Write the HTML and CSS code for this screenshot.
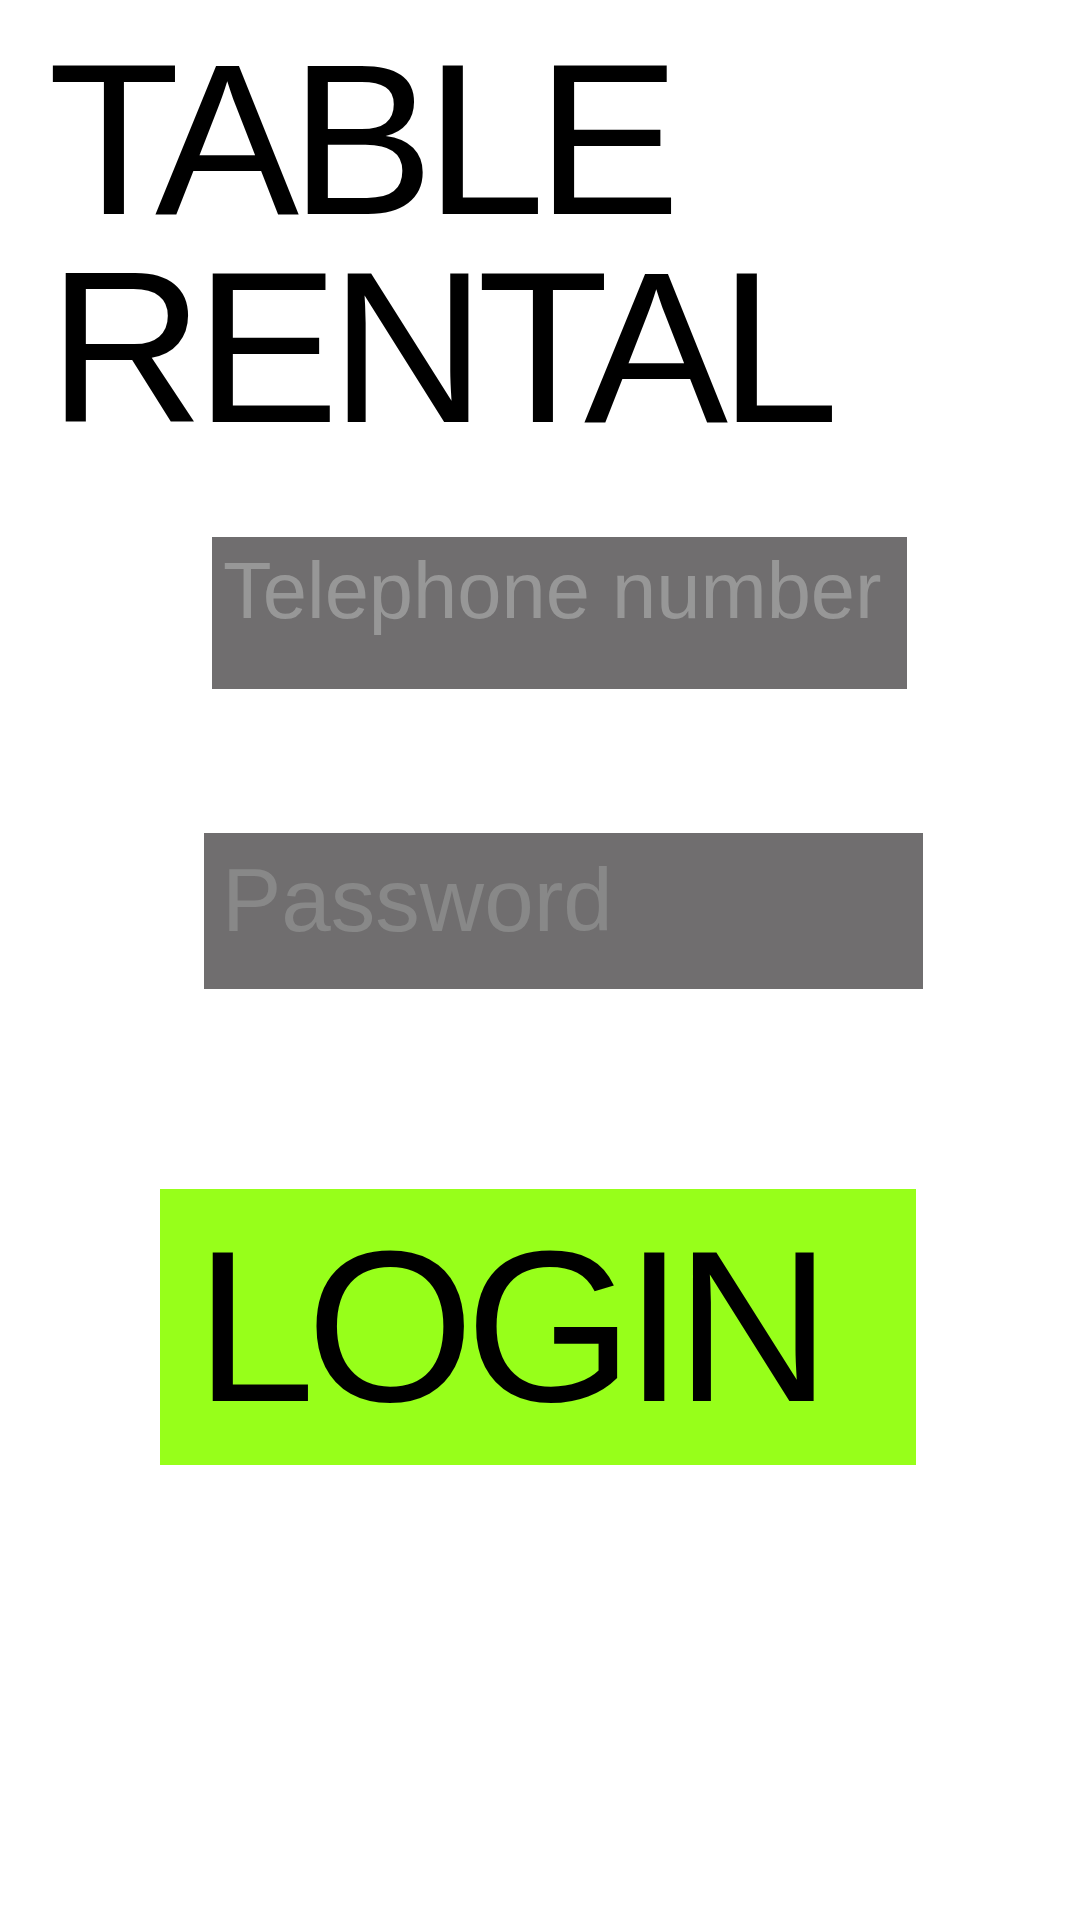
FILE: index.html
```html
<!DOCTYPE html>
<html lang="en">
<head>
<meta charset="utf-8">
<title>Table Rental</title>
<link rel="stylesheet" href="styles.css">
</head>
<body>
<main class="screen">
  <h1 class="title"><span class="title-line">TABLE</span><span class="title-line">RENTAL</span></h1>
  <div class="field field-phone"><span class="placeholder">Telephone number</span></div>
  <div class="field field-password"><span class="placeholder">Password</span></div>
  <div class="login"><span class="login-label">LOGIN</span></div>
</main>
</body>
</html>
```
FILE: styles.css
```css
html, body {
  margin: 0;
  padding: 0;
  background: #ffffff;
}

.screen {
  width: 1080px;
  height: 1920px;
  display: flex;
  flex-direction: column;
  align-items: flex-start;
  font-family: "Liberation Sans", Arial, sans-serif;
  box-sizing: border-box;
  padding-top: 35px;
}

.title {
  margin: 0 0 0 48px;
  font-weight: 400;
  font-size: 216px;
  line-height: 208px;
  letter-spacing: -9px;
  color: #000000;
  display: flex;
  flex-direction: column;
}

.title-line {
  display: block;
  height: 208px;
}

.field {
  background: #706e6f;
  box-sizing: border-box;
}

.field-phone {
  margin-top: 86px;
  margin-left: 212px;
  width: 695px;
  height: 152px;
  padding: 14px 0 0 11px;
}

.field-phone .placeholder {
  display: block;
  font-size: 79.5px;
  line-height: 80px;
  color: #979797;
}

.field-password {
  margin-top: 144px;
  margin-left: 204px;
  width: 719px;
  height: 156px;
  padding: 22px 0 0 18px;
}

.field-password .placeholder {
  display: block;
  font-size: 89px;
  line-height: 90px;
  color: #888888;
}

.login {
  margin-top: 200px;
  margin-left: 160px;
  width: 756px;
  height: 276px;
  background: #97ff1a;
  box-sizing: border-box;
  padding: 32px 0 0 35px;
}

.login-label {
  display: block;
  font-size: 216px;
  line-height: 210px;
  letter-spacing: -9px;
  color: #000000;
}
```
